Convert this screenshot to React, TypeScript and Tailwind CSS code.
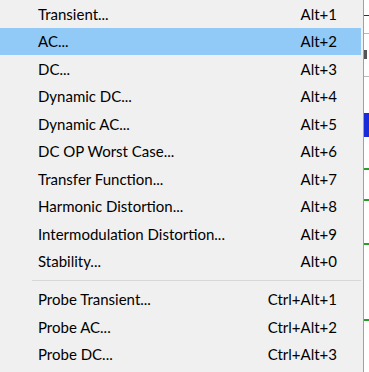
const groups = [
  [
    { label: 'Transient...', shortcut: 'Alt+1' },
    { label: 'AC...', shortcut: 'Alt+2', active: true },
    { label: 'DC...', shortcut: 'Alt+3' },
    { label: 'Dynamic DC...', shortcut: 'Alt+4' },
    { label: 'Dynamic AC...', shortcut: 'Alt+5' },
    { label: 'DC OP Worst Case...', shortcut: 'Alt+6' },
    { label: 'Transfer Function...', shortcut: 'Alt+7' },
    { label: 'Harmonic Distortion...', shortcut: 'Alt+8' },
    { label: 'Intermodulation Distortion...', shortcut: 'Alt+9' },
    { label: 'Stability...', shortcut: 'Alt+0' }
  ],
  [
    { label: 'Probe Transient...', shortcut: 'Ctrl+Alt+1' },
    { label: 'Probe AC...', shortcut: 'Ctrl+Alt+2' },
    { label: 'Probe DC...', shortcut: 'Ctrl+Alt+3' }
  ]
];

const MenuItem = ({ label, shortcut, active }: { label: string; shortcut: string; active?: boolean }) => (
  <div
    className={`flex items-center justify-between h-[27.5px] pl-[38px] pr-[24px] text-[15px] text-black ${
      active ? 'bg-[#91c9f7]' : ''
    }`}
  >
    <span>{label}</span>
    <span>{shortcut}</span>
  </div>
);

const Separator = () => (
  <div className="flex items-center h-[10.5px] pl-[32px]">
    <div className="w-full h-px bg-[#d7d7d7]" />
  </div>
);

// the window behind the menu, only a sliver of it shows
const BackWindow = () => (
  <div className="flex flex-col w-[5px] h-full bg-white overflow-hidden">
    <div className="h-[15px]" />
    <div className="h-px bg-[#333]" />
    <div className="h-[17px]" />
    <div className="h-px bg-[#b8b8b8]" />
    <div className="h-[16px]" />
    <div className="h-[9px] w-[3px] bg-[#555]" />
    <div className="h-[17px]" />
    <div className="h-px bg-[#b8b8b8]" />
    <div className="h-[36px]" />
    <div className="h-[24px] bg-[#1a2bd8]" />
    <div className="h-[31px]" />
    <div className="h-[2px] bg-[#2e9a2e]" />
    <div className="h-[29px]" />
    <div className="h-[2px] bg-[#2e9a2e]" />
    <div className="h-[42px]" />
    <div className="h-[2px] bg-[#2e9a2e]" />
    <div className="h-[74px]" />
    <div className="h-[2px] bg-[#2e9a2e]" />
  </div>
);

const App = () => {
  return (
    <div className="flex w-[369px] h-[372px] overflow-hidden bg-[#f0f0f0] font-['Lato','Noto_Sans',sans-serif]">
      <div className="flex flex-col w-[364px] h-full pr-[2px] bg-[#f0f0f0] border-r border-[#a0a0a0]">
        {groups.map((items, i) => (
          <div key={i}>
            {items.map((item) => (
              <MenuItem key={item.label} {...item} />
            ))}
            <Separator />
          </div>
        ))}
      </div>
      <BackWindow />
    </div>
  );
};

export default App;
